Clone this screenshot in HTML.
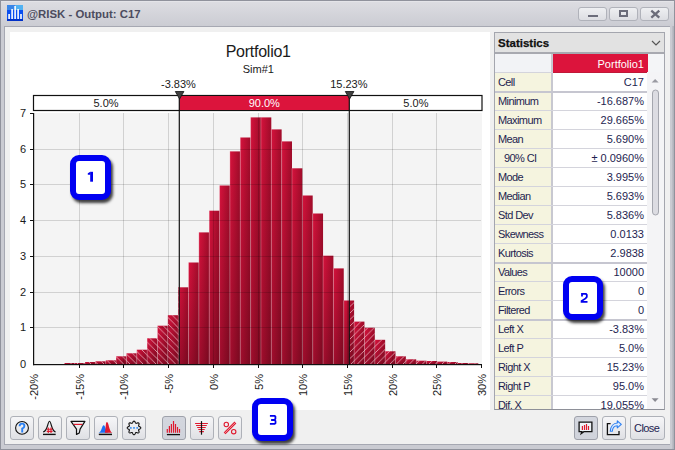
<!DOCTYPE html>
<html><head><meta charset="utf-8"><style>
*{box-sizing:border-box}
html,body{margin:0;padding:0;width:675px;height:450px;overflow:hidden;background:#f0f0f0;font-family:"Liberation Sans",sans-serif}
.abs{position:absolute}
#frame{position:absolute;left:0;top:0;width:675px;height:450px;background:#cacbd2;border:1px solid #90929c}
#titlebar{position:absolute;left:1px;top:1px;width:673px;height:25px;background:linear-gradient(#e8e8ec 0px,#dcdce1 1.5px,#cbccd3 100%)}
#client{position:absolute;left:4px;top:26px;width:666px;height:419px;background:#f0f0f0;border:1px solid #a6a8b2;border-right:none}
#rf{position:absolute;left:672px;top:26px;width:2px;height:423px;background:linear-gradient(90deg,#c0c1c9,#aeb0b8)}
#ttl{position:absolute;left:27px;top:8px;font-weight:bold;font-size:11.4px;color:#4c4c5e;white-space:nowrap;letter-spacing:0px}
.tb{position:absolute;top:7px;width:29px;height:14px;border:1px solid #b0b2ba;border-radius:3px;background:linear-gradient(#eeeff2,#dcdde2)}
#chart{position:absolute;left:10px;top:32px;width:480px;height:378px;background:#fff}
svg text{font-family:"Liberation Sans",sans-serif}
#stats{position:absolute;left:494px;top:32px;width:171px;height:378px;border:1px solid #a4a6ae;border-bottom:1px solid #8e9098;background:#f4f5f7;overflow:hidden}
#sh{position:absolute;left:0;top:0;width:169px;height:21px;background:#e2e2e2;border-bottom:2px solid #a8a9b0}
#sh span{position:absolute;left:3px;top:4px;font-weight:bold;font-size:11.5px;color:#111;-webkit-text-stroke:0.25px #111}
.row{position:absolute;left:0;width:152px;height:19px;border-top:1px solid #d4d4dc}
.lab{position:absolute;left:0;top:0;width:58px;height:18px;background:#f5f4df;border-right:2px solid #c8c8d0;font-size:11px;color:#1e1e50}
.lab span{position:absolute;left:3px;top:3px;white-space:nowrap;letter-spacing:-0.6px}
.val{position:absolute;left:58px;top:0;width:94px;height:18px;background:#fff;font-size:11px;color:#1e1e50}
.val span{position:absolute;right:3px;top:3px;white-space:nowrap}
.btn{position:absolute;top:416px;width:24px;height:24px;border:1px solid #aeb1b8;border-radius:3px;background:linear-gradient(#f6f6f8,#dfe0e4)}
.btn.on{background:linear-gradient(#d3d6de,#d0d3db);border-color:#9ea1aa}
.btn svg{position:absolute;left:-1px;top:-1px}
.callout{position:absolute;width:41px;height:45px;border:6px solid #0000f2;border-radius:9px;background:#fff;box-shadow:2px 3px 3px rgba(0,0,0,0.75);font-weight:bold;font-size:14px;color:#1515d6;-webkit-text-stroke:0.6px #1515d6;display:flex;align-items:center;justify-content:center}
</style></head><body>
<div id="frame"></div>
<div id="titlebar"></div>
<svg class="abs" style="left:7px;top:5px" width="16" height="16" viewBox="0 0 16 16">
<rect x="0" y="0" width="16" height="16" fill="#0a4ef0"/>
<rect x="0" y="0" width="8" height="5" fill="#3a86e8"/><rect x="8" y="0" width="8" height="5" fill="#52b2f2"/>
<rect x="0" y="14" width="16" height="2" fill="#0030c8"/>
<g fill="#fff"><rect x="1.3" y="9" width="1.6" height="5"/><rect x="4.3" y="4" width="1.6" height="10"/><rect x="7.3" y="1" width="1.6" height="13"/><rect x="10.3" y="4" width="1.6" height="10"/><rect x="13.2" y="9" width="1.6" height="5"/></g>
</svg>
<div id="ttl">@RISK - Output: C17</div>
<div class="tb" style="left:578px"><div class="abs" style="left:9px;top:7px;width:10px;height:2px;background:#6b6c7a"></div></div>
<div class="tb" style="left:609px"><div class="abs" style="left:9px;top:2px;width:9px;height:7px;border:2px solid #6b6c7a"></div></div>
<div class="tb" style="left:640px"><svg class="abs" style="left:0;top:0" width="28" height="14"><path d="M10.3 2.6L18.3 9.6M18.3 2.6L10.3 9.6" stroke="#6b6c7a" stroke-width="2.3"/></svg></div>
<div id="client"></div><div id="rf"></div>
<div id="chart">
<svg width="480" height="378" viewBox="10 32 480 378" style="position:absolute;left:0;top:0">
<defs>
<linearGradient id="bg" x1="0" x2="1" y1="0" y2="0"><stop offset="0" stop-color="#d6123c"/><stop offset="1" stop-color="#a00c2a"/></linearGradient>
<linearGradient id="vs" x1="0" y1="0" x2="0" y2="1"><stop offset="0" stop-color="#000" stop-opacity="0"/><stop offset="1" stop-color="#000" stop-opacity="0.25"/></linearGradient>
<pattern id="hL" patternUnits="userSpaceOnUse" width="6.5" height="6.5"><path d="M-1 -1L7.5 7.5M-1 5.5L1 7.5M5.5 -1L7.5 1" stroke="#f4c0cc" stroke-width="0.9" opacity="0.8"/></pattern>
<pattern id="hR" patternUnits="userSpaceOnUse" width="6.5" height="6.5"><path d="M-1 7.5L7.5 -1M-1 1L1 -1M5.5 7.5L7.5 5.5" stroke="#f4c0cc" stroke-width="0.9" opacity="0.8"/></pattern>
<clipPath id="cb"><path d="M64.30 363.0h10.35V364h-10.35ZM74.65 363.0h10.35V364h-10.35ZM85.00 362.0h10.35V364h-10.35ZM95.35 361.3h10.35V364h-10.35ZM105.70 360.3h10.35V364h-10.35ZM116.05 356.3h10.35V364h-10.35ZM126.40 353.3h10.35V364h-10.35ZM136.75 349.7h10.35V364h-10.35ZM147.10 338.3h10.35V364h-10.35ZM157.45 325.7h10.35V364h-10.35ZM167.80 315.2h10.35V364h-10.35ZM178.15 287.3h10.35V364h-10.35ZM188.50 262.5h10.35V364h-10.35ZM198.85 232.4h10.35V364h-10.35ZM209.20 210.7h10.35V364h-10.35ZM219.55 185.5h10.35V364h-10.35ZM229.90 151.4h10.35V364h-10.35ZM240.25 137.5h10.35V364h-10.35ZM250.60 117.4h10.35V364h-10.35ZM260.95 117.4h10.35V364h-10.35ZM271.30 129.4h10.35V364h-10.35ZM281.65 141.4h10.35V364h-10.35ZM292.00 168.3h10.35V364h-10.35ZM302.35 195.5h10.35V364h-10.35ZM312.70 213.5h10.35V364h-10.35ZM323.05 255.7h10.35V364h-10.35ZM333.40 268.4h10.35V364h-10.35ZM343.75 300.5h10.35V364h-10.35ZM354.10 321.6h10.35V364h-10.35ZM364.45 327.7h10.35V364h-10.35ZM374.80 339.8h10.35V364h-10.35ZM385.15 351.3h10.35V364h-10.35ZM395.50 356.3h10.35V364h-10.35ZM405.85 359.3h10.35V364h-10.35ZM416.20 360.7h10.35V364h-10.35ZM426.55 361.0h10.35V364h-10.35ZM436.90 361.6h10.35V364h-10.35ZM447.25 362.0h10.35V364h-10.35ZM457.60 363.0h10.35V364h-10.35ZM467.95 363.3h10.35V364h-10.35Z"/></clipPath>
</defs>
<rect x="34" y="113" width="448" height="251" fill="#f4f4f4"/>
<rect x="64.30" y="363.0" width="10.35" height="1.0" fill="url(#bg)"/>
<rect x="74.65" y="363.0" width="10.35" height="1.0" fill="url(#bg)"/>
<rect x="85.00" y="362.0" width="10.35" height="2.0" fill="url(#bg)"/>
<rect x="95.35" y="361.3" width="10.35" height="2.7" fill="url(#bg)"/>
<rect x="105.70" y="360.3" width="10.35" height="3.7" fill="url(#bg)"/>
<rect x="116.05" y="356.3" width="10.35" height="7.7" fill="url(#bg)"/>
<rect x="126.40" y="353.3" width="10.35" height="10.7" fill="url(#bg)"/>
<rect x="136.75" y="349.7" width="10.35" height="14.3" fill="url(#bg)"/>
<rect x="147.10" y="338.3" width="10.35" height="25.7" fill="url(#bg)"/>
<rect x="157.45" y="325.7" width="10.35" height="38.3" fill="url(#bg)"/>
<rect x="167.80" y="315.2" width="10.35" height="48.8" fill="url(#bg)"/>
<rect x="178.15" y="287.3" width="10.35" height="76.7" fill="url(#bg)"/>
<rect x="188.50" y="262.5" width="10.35" height="101.5" fill="url(#bg)"/>
<rect x="198.85" y="232.4" width="10.35" height="131.6" fill="url(#bg)"/>
<rect x="209.20" y="210.7" width="10.35" height="153.3" fill="url(#bg)"/>
<rect x="219.55" y="185.5" width="10.35" height="178.5" fill="url(#bg)"/>
<rect x="229.90" y="151.4" width="10.35" height="212.6" fill="url(#bg)"/>
<rect x="240.25" y="137.5" width="10.35" height="226.5" fill="url(#bg)"/>
<rect x="250.60" y="117.4" width="10.35" height="246.6" fill="url(#bg)"/>
<rect x="260.95" y="117.4" width="10.35" height="246.6" fill="url(#bg)"/>
<rect x="271.30" y="129.4" width="10.35" height="234.6" fill="url(#bg)"/>
<rect x="281.65" y="141.4" width="10.35" height="222.6" fill="url(#bg)"/>
<rect x="292.00" y="168.3" width="10.35" height="195.7" fill="url(#bg)"/>
<rect x="302.35" y="195.5" width="10.35" height="168.5" fill="url(#bg)"/>
<rect x="312.70" y="213.5" width="10.35" height="150.5" fill="url(#bg)"/>
<rect x="323.05" y="255.7" width="10.35" height="108.3" fill="url(#bg)"/>
<rect x="333.40" y="268.4" width="10.35" height="95.6" fill="url(#bg)"/>
<rect x="343.75" y="300.5" width="10.35" height="63.5" fill="url(#bg)"/>
<rect x="354.10" y="321.6" width="10.35" height="42.4" fill="url(#bg)"/>
<rect x="364.45" y="327.7" width="10.35" height="36.3" fill="url(#bg)"/>
<rect x="374.80" y="339.8" width="10.35" height="24.2" fill="url(#bg)"/>
<rect x="385.15" y="351.3" width="10.35" height="12.7" fill="url(#bg)"/>
<rect x="395.50" y="356.3" width="10.35" height="7.7" fill="url(#bg)"/>
<rect x="405.85" y="359.3" width="10.35" height="4.7" fill="url(#bg)"/>
<rect x="416.20" y="360.7" width="10.35" height="3.3" fill="url(#bg)"/>
<rect x="426.55" y="361.0" width="10.35" height="3.0" fill="url(#bg)"/>
<rect x="436.90" y="361.6" width="10.35" height="2.4" fill="url(#bg)"/>
<rect x="447.25" y="362.0" width="10.35" height="2.0" fill="url(#bg)"/>
<rect x="457.60" y="363.0" width="10.35" height="1.0" fill="url(#bg)"/>
<rect x="467.95" y="363.3" width="10.35" height="0.7" fill="url(#bg)"/>
<g fill="url(#vs)"><rect x="64.30" y="363.0" width="10.35" height="1.0"/>
<rect x="74.65" y="363.0" width="10.35" height="1.0"/>
<rect x="85.00" y="362.0" width="10.35" height="2.0"/>
<rect x="95.35" y="361.3" width="10.35" height="2.7"/>
<rect x="105.70" y="360.3" width="10.35" height="3.7"/>
<rect x="116.05" y="356.3" width="10.35" height="7.7"/>
<rect x="126.40" y="353.3" width="10.35" height="10.7"/>
<rect x="136.75" y="349.7" width="10.35" height="14.3"/>
<rect x="147.10" y="338.3" width="10.35" height="25.7"/>
<rect x="157.45" y="325.7" width="10.35" height="38.3"/>
<rect x="167.80" y="315.2" width="10.35" height="48.8"/>
<rect x="178.15" y="287.3" width="10.35" height="76.7"/>
<rect x="188.50" y="262.5" width="10.35" height="101.5"/>
<rect x="198.85" y="232.4" width="10.35" height="131.6"/>
<rect x="209.20" y="210.7" width="10.35" height="153.3"/>
<rect x="219.55" y="185.5" width="10.35" height="178.5"/>
<rect x="229.90" y="151.4" width="10.35" height="212.6"/>
<rect x="240.25" y="137.5" width="10.35" height="226.5"/>
<rect x="250.60" y="117.4" width="10.35" height="246.6"/>
<rect x="260.95" y="117.4" width="10.35" height="246.6"/>
<rect x="271.30" y="129.4" width="10.35" height="234.6"/>
<rect x="281.65" y="141.4" width="10.35" height="222.6"/>
<rect x="292.00" y="168.3" width="10.35" height="195.7"/>
<rect x="302.35" y="195.5" width="10.35" height="168.5"/>
<rect x="312.70" y="213.5" width="10.35" height="150.5"/>
<rect x="323.05" y="255.7" width="10.35" height="108.3"/>
<rect x="333.40" y="268.4" width="10.35" height="95.6"/>
<rect x="343.75" y="300.5" width="10.35" height="63.5"/>
<rect x="354.10" y="321.6" width="10.35" height="42.4"/>
<rect x="364.45" y="327.7" width="10.35" height="36.3"/>
<rect x="374.80" y="339.8" width="10.35" height="24.2"/>
<rect x="385.15" y="351.3" width="10.35" height="12.7"/>
<rect x="395.50" y="356.3" width="10.35" height="7.7"/>
<rect x="405.85" y="359.3" width="10.35" height="4.7"/>
<rect x="416.20" y="360.7" width="10.35" height="3.3"/>
<rect x="426.55" y="361.0" width="10.35" height="3.0"/>
<rect x="436.90" y="361.6" width="10.35" height="2.4"/>
<rect x="447.25" y="362.0" width="10.35" height="2.0"/>
<rect x="457.60" y="363.0" width="10.35" height="1.0"/>
<rect x="467.95" y="363.3" width="10.35" height="0.7"/></g>
<g fill="#fff" opacity="0.24"><rect x="74.15" y="363.0" width="1" height="1.0"/>
<rect x="84.50" y="362.0" width="1" height="2.0"/>
<rect x="94.85" y="361.3" width="1" height="2.7"/>
<rect x="105.20" y="360.3" width="1" height="3.7"/>
<rect x="115.55" y="356.3" width="1" height="7.7"/>
<rect x="125.90" y="353.3" width="1" height="10.7"/>
<rect x="136.25" y="349.7" width="1" height="14.3"/>
<rect x="146.60" y="338.3" width="1" height="25.7"/>
<rect x="156.95" y="325.7" width="1" height="38.3"/>
<rect x="167.30" y="315.2" width="1" height="48.8"/>
<rect x="177.65" y="287.3" width="1" height="76.7"/>
<rect x="188.00" y="262.5" width="1" height="101.5"/>
<rect x="198.35" y="232.4" width="1" height="131.6"/>
<rect x="208.70" y="210.7" width="1" height="153.3"/>
<rect x="219.05" y="185.5" width="1" height="178.5"/>
<rect x="229.40" y="151.4" width="1" height="212.6"/>
<rect x="239.75" y="137.5" width="1" height="226.5"/>
<rect x="250.10" y="117.4" width="1" height="246.6"/>
<rect x="260.45" y="117.4" width="1" height="246.6"/>
<rect x="270.80" y="129.4" width="1" height="234.6"/>
<rect x="281.15" y="141.4" width="1" height="222.6"/>
<rect x="291.50" y="168.3" width="1" height="195.7"/>
<rect x="301.85" y="195.5" width="1" height="168.5"/>
<rect x="312.20" y="213.5" width="1" height="150.5"/>
<rect x="322.55" y="255.7" width="1" height="108.3"/>
<rect x="332.90" y="268.4" width="1" height="95.6"/>
<rect x="343.25" y="300.5" width="1" height="63.5"/>
<rect x="353.60" y="321.6" width="1" height="42.4"/>
<rect x="363.95" y="327.7" width="1" height="36.3"/>
<rect x="374.30" y="339.8" width="1" height="24.2"/>
<rect x="384.65" y="351.3" width="1" height="12.7"/>
<rect x="395.00" y="356.3" width="1" height="7.7"/>
<rect x="405.35" y="359.3" width="1" height="4.7"/>
<rect x="415.70" y="360.7" width="1" height="3.3"/>
<rect x="426.05" y="361.0" width="1" height="3.0"/>
<rect x="436.40" y="361.6" width="1" height="2.4"/>
<rect x="446.75" y="362.0" width="1" height="2.0"/>
<rect x="457.10" y="363.0" width="1" height="1.0"/>
<rect x="467.45" y="363.3" width="1" height="0.7"/></g>
<g fill="#000" fill-opacity="0.14"><rect x="79" y="113" width="1" height="251"/>
<rect x="123" y="113" width="1" height="251"/>
<rect x="168" y="113" width="1" height="251"/>
<rect x="213" y="113" width="1" height="251"/>
<rect x="258" y="113" width="1" height="251"/>
<rect x="302" y="113" width="1" height="251"/>
<rect x="347" y="113" width="1" height="251"/>
<rect x="392" y="113" width="1" height="251"/>
<rect x="436" y="113" width="1" height="251"/>
<rect x="34" y="327" width="447" height="1"/>
<rect x="34" y="292" width="447" height="1"/>
<rect x="34" y="256" width="447" height="1"/>
<rect x="34" y="220" width="447" height="1"/>
<rect x="34" y="184" width="447" height="1"/>
<rect x="34" y="149" width="447" height="1"/></g>
<g clip-path="url(#cb)"><rect x="60" y="100" width="119.3" height="270" fill="url(#hL)"/><rect x="349.3" y="100" width="140.7" height="270" fill="url(#hR)"/></g>
<g fill="#111">
<rect x="33" y="113" width="1.2" height="252.2"/><rect x="33" y="364" width="449" height="1.2"/>
<rect x="30" y="327" width="3" height="1"/>
<rect x="30" y="292" width="3" height="1"/>
<rect x="30" y="256" width="3" height="1"/>
<rect x="30" y="220" width="3" height="1"/>
<rect x="30" y="184" width="3" height="1"/>
<rect x="30" y="149" width="3" height="1"/>
<rect x="30" y="113" width="3" height="1"/>
<rect x="79" y="365" width="1" height="3"/>
<rect x="123" y="365" width="1" height="3"/>
<rect x="168" y="365" width="1" height="3"/>
<rect x="213" y="365" width="1" height="3"/>
<rect x="258" y="365" width="1" height="3"/>
<rect x="302" y="365" width="1" height="3"/>
<rect x="347" y="365" width="1" height="3"/>
<rect x="392" y="365" width="1" height="3"/>
<rect x="436" y="365" width="1" height="3"/>
<rect x="481" y="365" width="1" height="3"/>
</g>
<g font-size="11" fill="#1a1a1a"><text x="26" y="368.3" text-anchor="end">0</text>
<text x="26" y="331.3" text-anchor="end">1</text>
<text x="26" y="296.3" text-anchor="end">2</text>
<text x="26" y="260.3" text-anchor="end">3</text>
<text x="26" y="224.3" text-anchor="end">4</text>
<text x="26" y="188.3" text-anchor="end">5</text>
<text x="26" y="153.3" text-anchor="end">6</text>
<text x="26" y="117.3" text-anchor="end">7</text></g>
<g font-size="11" fill="#1a1a1a"><text transform="translate(38.3,374) rotate(-90)" text-anchor="end">-20%</text>
<text transform="translate(84.3,374) rotate(-90)" text-anchor="end">-15%</text>
<text transform="translate(128.3,374) rotate(-90)" text-anchor="end">-10%</text>
<text transform="translate(173.3,374) rotate(-90)" text-anchor="end">-5%</text>
<text transform="translate(218.3,374) rotate(-90)" text-anchor="end">0%</text>
<text transform="translate(263.3,374) rotate(-90)" text-anchor="end">5%</text>
<text transform="translate(307.3,374) rotate(-90)" text-anchor="end">10%</text>
<text transform="translate(352.3,374) rotate(-90)" text-anchor="end">15%</text>
<text transform="translate(397.3,374) rotate(-90)" text-anchor="end">20%</text>
<text transform="translate(441.3,374) rotate(-90)" text-anchor="end">25%</text>
<text transform="translate(486.3,374) rotate(-90)" text-anchor="end">30%</text></g>
<rect x="33.5" y="95.5" width="448.5" height="15" fill="#fff" stroke="#111" stroke-width="1.2"/>
<rect x="179.3" y="96" width="170.0" height="14" fill="#dc143c"/>
<text x="106" y="106.5" font-size="11" text-anchor="middle" fill="#1a1a1a">5.0%</text>
<text x="264.3" y="106.5" font-size="11" text-anchor="middle" fill="#fff">90.0%</text>
<text x="415.9" y="106.5" font-size="11" text-anchor="middle" fill="#1a1a1a">5.0%</text>
<line x1="179.3" y1="96" x2="179.3" y2="364" stroke="#111" stroke-width="1.2"/>
<line x1="349.3" y1="96" x2="349.3" y2="364" stroke="#111" stroke-width="1.2"/>
<path d="M175.3 91.5h8.6l-4.3 7.5z" fill="#404040" stroke="#111" stroke-width="0.8"/>
<path d="M345.3 91.5h8.6l-4.3 7.5z" fill="#404040" stroke="#111" stroke-width="0.8"/>
<text x="178.4" y="87.8" font-size="11" text-anchor="middle" fill="#1a1a1a">-3.83%</text>
<text x="348.8" y="87.8" font-size="11" text-anchor="middle" fill="#1a1a1a">15.23%</text>
<text x="258.2" y="56.5" font-size="16" letter-spacing="-0.25" text-anchor="middle" fill="#1a1a1a">Portfolio1</text>
<text x="258.3" y="72.8" font-size="11" text-anchor="middle" fill="#1a1a1a">Sim#1</text>
</svg>
</div>
<div id="stats">
<div id="sh"><span>Statistics</span><svg class="abs" style="left:156px;top:7px" width="10" height="6"><path d="M1 1L5 5L9 1" fill="none" stroke="#555" stroke-width="1.2"/></svg></div>
<div class="row" style="top:21px;border-top:none;height:19px"><div class="lab" style="background:#f2f3f6;height:18px"></div><div class="val" style="background:#dc143c;height:19px;width:95px;color:#fff"><span style="top:4px;right:4px">Portfolio1</span></div></div>
<div class="row" style="top:39px;"><div class="lab"><span>Cell</span></div><div class="val"><span>C17</span></div></div>
<div class="row" style="top:58px;border-top:2px solid #c6c6d0;"><div class="lab"><span style="top:2px">Minimum</span></div><div class="val"><span style="top:2px">-16.687%</span></div></div>
<div class="row" style="top:77px;"><div class="lab"><span>Maximum</span></div><div class="val"><span>29.665%</span></div></div>
<div class="row" style="top:96px;"><div class="lab"><span>Mean</span></div><div class="val"><span>5.690%</span></div></div>
<div class="row" style="top:115px;"><div class="lab"><span style="padding-left:6px">90% CI</span></div><div class="val"><span>± 0.0960%</span></div></div>
<div class="row" style="top:134px;"><div class="lab"><span>Mode</span></div><div class="val"><span>3.995%</span></div></div>
<div class="row" style="top:153px;"><div class="lab"><span>Median</span></div><div class="val"><span>5.693%</span></div></div>
<div class="row" style="top:172px;"><div class="lab"><span>Std Dev</span></div><div class="val"><span>5.836%</span></div></div>
<div class="row" style="top:191px;"><div class="lab"><span>Skewness</span></div><div class="val"><span>0.0133</span></div></div>
<div class="row" style="top:210px;"><div class="lab"><span>Kurtosis</span></div><div class="val"><span>2.9838</span></div></div>
<div class="row" style="top:229px;border-top:2px solid #c6c6d0;"><div class="lab"><span style="top:2px">Values</span></div><div class="val"><span style="top:2px">10000</span></div></div>
<div class="row" style="top:248px;"><div class="lab"><span>Errors</span></div><div class="val"><span>0</span></div></div>
<div class="row" style="top:267px;"><div class="lab"><span>Filtered</span></div><div class="val"><span>0</span></div></div>
<div class="row" style="top:286px;border-top:2px solid #c6c6d0;"><div class="lab"><span style="top:2px">Left X</span></div><div class="val"><span style="top:2px">-3.83%</span></div></div>
<div class="row" style="top:305px;"><div class="lab"><span>Left P</span></div><div class="val"><span>5.0%</span></div></div>
<div class="row" style="top:324px;"><div class="lab"><span>Right X</span></div><div class="val"><span>15.23%</span></div></div>
<div class="row" style="top:343px;"><div class="lab"><span>Right P</span></div><div class="val"><span>95.0%</span></div></div>
<div class="row" style="top:362px;"><div class="lab"><span>Dif. X</span></div><div class="val"><span>19.055%</span></div></div>
<div class="abs" style="left:58px;top:39px;width:94px;height:1px;background:#c01838"></div>
<div class="abs" style="left:152px;top:39px;width:17px;height:338px;background:#f4f4f6"></div>
<svg class="abs" style="left:152px;top:39px" width="16" height="337"><path d="M4.6 10.5h7l-3.5-3.6z" fill="#9a9aa2"/><rect x="5.5" y="18" width="6" height="125" rx="3" fill="#dcdce2" stroke="#a4a6ae" stroke-width="1"/><path d="M4.6 326.3h7l-3.5 3.6z" fill="#8a8a92"/></svg>
</div>

<div class="btn" style="left:10px"><svg width="24" height="24"><circle cx="12" cy="11.9" r="6.4" fill="none" stroke="#111" stroke-width="1.1"/><path d="M9.6 10.2Q9.6 7.6 12 7.6Q14.4 7.6 14.4 9.9Q14.4 11.4 12.2 12.6V16.4" fill="none" stroke="#2a80f2" stroke-width="1.9"/></svg></div>
<div class="btn" style="left:38px"><svg width="24" height="24"><path d="M5.1 16C7.5 15.5 8.6 13 9.6 9.5C10.3 7 10.8 5.3 11.5 5.3C12.2 5.3 12.7 7 13.4 9.5C14.4 13 15.5 15.5 17.6 16" fill="none" stroke="#111" stroke-width="1.1"/><path d="M5 18.4H17.7" stroke="#111" stroke-width="1.4"/><path d="M10.3 11.6V16.9M13 11.6V16.9M8.7 13.2H14.6M8.7 15.4H14.6" stroke="#e01a2e" stroke-width="1.1"/></svg></div>
<div class="btn" style="left:66px"><svg width="24" height="24"><path d="M5 5.4H18.9L14.1 13.1L13.3 17L10.5 18.4V13.1Z" fill="none" stroke="#111" stroke-width="1.2" stroke-linejoin="round"/><path d="M7.6 8.4H16.3" stroke="#e01a2e" stroke-width="1.2"/></svg></div>
<div class="btn" style="left:94px"><svg width="24" height="24"><path d="M4.6 16.7C7.6 16.3 8 9.2 9.7 9.2C11.4 9.2 11.8 16.3 14.6 16.7Z" fill="#1a6ef5"/><path d="M10.7 16.7C12 14.5 11.3 6 13 6C14.8 6 15 15.6 18.3 16.7Z" fill="#e0182e"/><path d="M4.8 18.4H18" stroke="#111" stroke-width="1.5"/></svg></div>
<div class="btn" style="left:122px"><svg width="24" height="24"><path d="M18.80 11.90 L18.75 12.17 L18.61 12.42 L18.38 12.66 L18.10 12.87 L17.79 13.05 L17.47 13.21 L17.17 13.36 L16.92 13.50 L16.73 13.65 L16.62 13.81 L16.58 14.01 L16.61 14.25 L16.69 14.52 L16.79 14.84 L16.91 15.18 L17.00 15.53 L17.05 15.88 L17.04 16.20 L16.96 16.49 L16.81 16.71 L16.59 16.86 L16.30 16.94 L15.98 16.95 L15.63 16.90 L15.28 16.81 L14.94 16.69 L14.62 16.59 L14.35 16.51 L14.11 16.48 L13.91 16.52 L13.75 16.63 L13.60 16.82 L13.46 17.07 L13.31 17.37 L13.15 17.69 L12.97 18.00 L12.76 18.28 L12.52 18.51 L12.27 18.65 L12.00 18.70 L11.73 18.65 L11.48 18.51 L11.24 18.28 L11.03 18.00 L10.85 17.69 L10.69 17.37 L10.54 17.07 L10.40 16.82 L10.25 16.63 L10.09 16.52 L9.89 16.48 L9.65 16.51 L9.38 16.59 L9.06 16.69 L8.72 16.81 L8.37 16.90 L8.02 16.95 L7.70 16.94 L7.41 16.86 L7.19 16.71 L7.04 16.49 L6.96 16.20 L6.95 15.88 L7.00 15.53 L7.09 15.18 L7.21 14.84 L7.31 14.52 L7.39 14.25 L7.42 14.01 L7.38 13.81 L7.27 13.65 L7.08 13.50 L6.83 13.36 L6.53 13.21 L6.21 13.05 L5.90 12.87 L5.62 12.66 L5.39 12.42 L5.25 12.17 L5.20 11.90 L5.25 11.63 L5.39 11.38 L5.62 11.14 L5.90 10.93 L6.21 10.75 L6.53 10.59 L6.83 10.44 L7.08 10.30 L7.27 10.15 L7.38 9.99 L7.42 9.79 L7.39 9.55 L7.31 9.28 L7.21 8.96 L7.09 8.62 L7.00 8.27 L6.95 7.92 L6.96 7.60 L7.04 7.31 L7.19 7.09 L7.41 6.94 L7.70 6.86 L8.02 6.85 L8.37 6.90 L8.72 6.99 L9.06 7.11 L9.38 7.21 L9.65 7.29 L9.89 7.32 L10.09 7.28 L10.25 7.17 L10.40 6.98 L10.54 6.73 L10.69 6.43 L10.85 6.11 L11.03 5.80 L11.24 5.52 L11.48 5.29 L11.73 5.15 L12.00 5.10 L12.27 5.15 L12.52 5.29 L12.76 5.52 L12.97 5.80 L13.15 6.11 L13.31 6.43 L13.46 6.73 L13.60 6.98 L13.75 7.17 L13.91 7.28 L14.11 7.32 L14.35 7.29 L14.62 7.21 L14.94 7.11 L15.28 6.99 L15.63 6.90 L15.98 6.85 L16.30 6.86 L16.59 6.94 L16.81 7.09 L16.96 7.31 L17.04 7.60 L17.05 7.92 L17.00 8.27 L16.91 8.62 L16.79 8.96 L16.69 9.28 L16.61 9.55 L16.58 9.79 L16.62 9.99 L16.73 10.15 L16.92 10.30 L17.17 10.44 L17.47 10.59 L17.79 10.75 L18.10 10.93 L18.38 11.14 L18.61 11.38 L18.75 11.63 L18.80 11.90Z" fill="none" stroke="#111" stroke-width="1.1"/><g fill="#4a9af2"><rect x="7.9" y="11" width="1.8" height="1.8"/><rect x="11.1" y="11" width="1.8" height="1.8"/><rect x="14.3" y="11" width="1.8" height="1.8"/></g></svg></div>
<div class="btn on" style="left:162px"><svg width="24" height="24"><g stroke="#e0182e" stroke-width="1.2"><path d="M5.3 13.1V16.8M7.4 10.1V16.8M9.4 8V16.8M11.5 5.1V16.8M13.5 8V16.8M15.5 10.9V16.8M17.5 13.1V16.8"/></g><path d="M4.9 18.6H18" stroke="#111" stroke-width="1.3"/></svg></div>
<div class="btn" style="left:190px"><svg width="24" height="24"><g stroke="#e0182e" stroke-width="1.2"><path d="M5.1 7.5H17.9M6.1 9.5H16.8M7.2 11.5H15.7M8.3 13.5H14.7M9.3 15.6H13.9"/></g><path d="M11.5 5.1V18.7" stroke="#111" stroke-width="1.2"/></svg></div>
<div class="btn" style="left:218px"><svg width="24" height="24"><g fill="none" stroke="#e0182e" stroke-width="1.1"><circle cx="8.3" cy="8.5" r="2.2"/><circle cx="15.7" cy="15.7" r="2.2"/><path d="M17.4 6.5L6.6 17.3" stroke-width="2.6"/><path d="M17.4 6.5L6.6 17.3" stroke="#f4c8d0" stroke-width="0.7"/></g></svg></div>
<div class="btn on" style="left:574px"><svg width="24" height="24"><path d="M5.1 6.1H17.9V15.7H9.9L7.2 17.6L7.8 15.7H5.1Z" fill="#eef3f8" stroke="#111" stroke-width="1.3" stroke-linejoin="miter"/><g stroke="#e0182e" stroke-width="1.2"><path d="M8.4 9.9V13.9M10.5 9.1V13.9M12.5 8V13.9M14.5 9.9V13.9"/></g></svg></div>
<div class="btn" style="left:602px"><svg width="24" height="24"><path d="M8.6 7.6H5.4V18.6H17V15" fill="none" stroke="#111" stroke-width="1.3"/><path d="M8.3 15.2C8.6 10.5 11.5 7.2 15.3 7V4.9L19.3 8.4L15.3 11.9V9.8C12.6 9.9 10.6 11.8 10.3 15.2Z" fill="#dceafc" stroke="#2a7ff2" stroke-width="1.1" stroke-linejoin="round"/></svg></div>
<div class="btn" style="left:630px;width:35px"><span class="abs" style="left:3px;top:4.5px;font-size:11px;color:#1e1e50;letter-spacing:-0.55px">Close</span></div>
<div class="callout" style="left:70px;top:155px"></div>
<div class="callout" style="left:563px;top:276px;width:40px;height:44px"></div>
<div class="callout" style="left:252px;top:398px;height:43px"></div>
<svg class="abs" style="left:0;top:0" width="675" height="450"><g fill="#0000ee"><rect x="90.2" y="171.8" width="2.8" height="9.9"/><path d="M87.8 173.3L90.4 171.8V174.8H87.8Z"/></g>
<g fill="none" stroke="#0000ee" stroke-width="1.8" stroke-linejoin="miter"><path d="M582 296.4V293.9H586L586.8 294.8V297L585.6 298.4L581.6 300.9V301.9H587.5"/><path d="M269.9 415.8H274.7L275.4 416.6V418.7L274.6 420H271.1M274.6 420L275.5 421V423.2L274.7 423.9H269.9"/></g></svg>
</body></html>
